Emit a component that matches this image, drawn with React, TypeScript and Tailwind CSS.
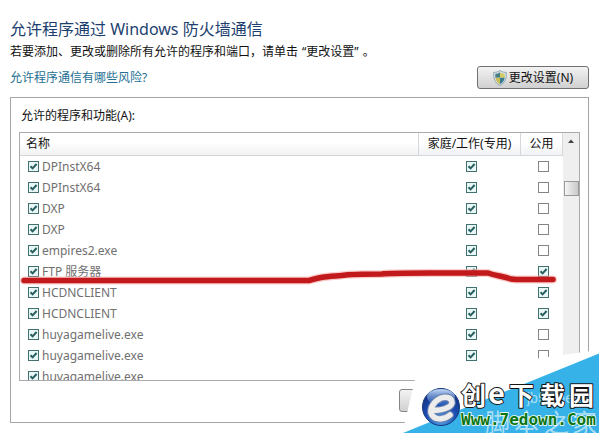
import React from "react";

type Program = { name: string; home: boolean; open: boolean };

const programs: Program[] = [
  { name: "DPInstX64", home: true, open: false },
  { name: "DPInstX64", home: true, open: false },
  { name: "DXP", home: true, open: false },
  { name: "DXP", home: true, open: false },
  { name: "empires2.exe", home: true, open: false },
  { name: "FTP 服务器", home: true, open: true },
  { name: "HCDNCLIENT", home: true, open: true },
  { name: "HCDNCLIENT", home: true, open: true },
  { name: "huyagamelive.exe", home: true, open: false },
  { name: "huyagamelive.exe", home: true, open: false },
  { name: "huyagamelive.exe", home: true, open: false },
];

function Tick({ id, label, on }: { id?: string; label?: string; on: boolean }) {
  return (
    <span className="grid size-[11px] shrink-0">
      <input
        id={id}
        type="checkbox"
        aria-label={label}
        defaultChecked={on}
        className="peer col-start-1 row-start-1 size-[11px] appearance-none border border-[#858585] bg-white checked:border-[#42706f] checked:bg-[#e9f8f7]"
      />
      <svg
        viewBox="0 0 11 11"
        className="pointer-events-none invisible col-start-1 row-start-1 size-[11px] peer-checked:visible"
      >
        <path d="M2.5 5.2 4.6 7.4 8.6 3" fill="none" stroke="#275f5e" strokeWidth="2" />
      </svg>
    </span>
  );
}

function Shield() {
  return (
    <svg viewBox="0 0 14 16" className="h-4 w-3.5">
      <path d="M7 .5C5 2 3 2.4 .7 2.4 .2 8.5 2 13 7 15.5 12 13 13.8 8.5 13.3 2.4 11 2.4 9 2 7 .5Z" fill="#d9e4e8" stroke="#8299a5" strokeWidth=".8" />
      <path d="M7 2.2C5.5 3.2 4 3.7 2.3 3.8V7.800H7Z" fill="#4a7fa5" />
      <path d="M7 2.2C8.5 3.2 10 3.7 11.7 3.8V7.800H7Z" fill="#d4c963" />
      <path d="M2.3 7.8C2.7 10.8 4.3 12.8 7 14.2V7.8Z" fill="#ccbd55" />
      <path d="M11.7 7.8C11.3 10.8 9.7 12.8 7 14.2V7.8Z" fill="#397d91" />
      <path d="M3 4.5C5 4.3 6 3.6 7 3V7H3Z" fill="#49835e" opacity=".6" />
    </svg>
  );
}

const markerPath =
  "M24 280.5H309C322 277 326 276.5 341 275.5 352 274 362 274 382 274 390 272.5 400 273 488 273 496 276 503 276 511 279 516 280 524 279.5 553 279.5";

function Marker() {
  return (
    <svg viewBox="0 0 599 435" className="pointer-events-none absolute top-0 left-0 h-[435px] w-[599px]" fill="none" strokeLinecap="round" strokeLinejoin="round">
      <path d={markerPath} stroke="#f6aaa6" strokeWidth="8" opacity=".6" />
      <path d={markerPath} stroke="#c21a1c" strokeWidth="5.5" />
    </svg>
  );
}

function Watermark() {
  return (
    <svg viewBox="399 345 200 90" className="pointer-events-none absolute right-0 top-[345px] h-[90px] w-[200px]">
      <defs>
        <radialGradient id="orb" cx=".5" cy=".85" r=".8">
          <stop offset="0" stopColor="#55a8ee" />
          <stop offset=".5" stopColor="#1c50b6" />
          <stop offset="1" stopColor="#122f7c" />
        </radialGradient>
        <linearGradient id="gloss" x1="0" y1="0" x2="0" y2="1">
          <stop offset="0" stopColor="#c7dcf8" />
          <stop offset="1" stopColor="#3d73cc" stopOpacity=".4" />
        </linearGradient>
      </defs>
      <path d="M416 375 540 358 599 350V435H399L403 430Z" fill="#fff" />
      <path d="M599 353.5 403 433H599Z" fill="#36b2e9" />
      <text x="527" y="403" fontSize="14" fill="#a9def5" className="font-['Liberation_Sans',sans-serif]">jb51.net</text>
      <text x="485" y="432" fontSize="25" fill="#a9def5" className="font-['Noto_Sans_CJK_SC',sans-serif]">
        <tspan x="485">脚</tspan>
        <tspan x="514">本</tspan>
        <tspan x="544">之</tspan>
        <tspan x="572">家</tspan>
      </text>
      <path d="M399 433H599V435H399Z" fill="#fff" />
      <circle cx="441" cy="407" r="18.5" fill="url(#orb)" stroke="#173779" />
      <ellipse cx="441" cy="397" rx="14" ry="8" fill="url(#gloss)" />
      <g fill="none" strokeLinecap="round">
        <path d="M433 410C440 411 451 408 452 403 452 398 447 396 441 398 434 401 430 408 431 413 434 421 444 420 450 415" stroke="#6c83ad" strokeWidth="7.5" />
        <path d="M433 410C440 411 451 408 452 403 452 398 447 396 441 398 434 401 430 408 431 413 434 421 444 420 450 415" stroke="#ececec" strokeWidth="5.5" />
      </g>
      <g fill="#fff" stroke="#151515" strokeWidth="2" paintOrder="stroke" strokeLinejoin="round" fontSize="25" fontWeight="700" className="font-['Noto_Sans_CJK_SC',sans-serif]">
        <text x="461" y="405">创</text>
        <text x="488" y="404" fontSize="29">e</text>
        <text x="509" y="405">下</text>
        <text x="540" y="405">载</text>
        <text x="569" y="405">园</text>
      </g>
      <text x="461" y="425" fontSize="16" fontWeight="700" fill="#0b7414" stroke="#f4fff2" strokeWidth="1.5" paintOrder="stroke" className="font-['DejaVu_Sans_Mono',monospace]">
        Www.7edown.Com
      </text>
    </svg>
  );
}

export default function App() {
  return (
    <main className="relative overflow-hidden bg-white px-2.5 pt-[18px] pb-3 font-['Noto_Sans','Noto_Sans_CJK_SC',sans-serif] text-xs text-[#111]">
      <h1 className="text-base leading-[22px] text-[#1d3f70]">允许程序通过 Windows 防火墙通信</h1>
      <p className="mt-0.5 leading-5">
        若要添加、更改或删除所有允许的程序和端口，请单击<span className="mx-1">“更改设置”</span>。
      </p>
      <div className="mt-1 flex items-start justify-between">
        <a href="#risks" className="mt-0.5 leading-5 text-[#256f92]">允许程序通信有哪些风险?</a>
        <button className="flex h-[23px] w-28 items-center justify-center gap-0.5 rounded-[3px] border border-[#707070] bg-linear-to-b from-[#f3f3f3] to-[#d0d0d0]">
          <Shield />
          更改设置(N)
        </button>
      </div>

      <section className="mt-2 border border-[#a5a5a5] px-2 pt-2 pb-2.5">
        <h2 id="list-title" className="ml-0.5 pb-1.5 leading-5">允许的程序和功能(A):</h2>
        <div className="flex h-[249px] overflow-hidden border border-[#a9abae]">
          <div className="min-w-0 flex-1 overflow-hidden">
            <table aria-labelledby="list-title" className="w-full table-fixed border-separate border-spacing-0">
              <thead>
                <tr className="h-[23px] bg-linear-to-b from-white from-40% to-[#f0f1f3] to-100% text-left">
                  <th className="border-b border-[#d5d5d5] p-0 pl-1.5 font-normal">名称</th>
                  <th className="w-[102px] border-b border-l border-[#d5d9de] p-0 text-center font-normal whitespace-nowrap">家庭/工作(专用)</th>
                  <th className="w-[43px] border-x border-b border-[#d5d9de] p-0 text-center font-normal">公用</th>
                </tr>
              </thead>
              <tbody className="text-[#707070]">
                {programs.map((p, i) => (
                  <tr key={i} className="h-[21px]">
                    <td className="p-0 pl-2">
                      <div className="flex items-center gap-[3px] leading-5">
                        <Tick id={`program-${i}`} on />
                        <label htmlFor={`program-${i}`}>{p.name}</label>
                      </div>
                    </td>
                    <td className="p-0 pl-1">
                      <div className="flex justify-center"><Tick label={`${p.name} 家庭/工作(专用)`} on={p.home} /></div>
                    </td>
                    <td className="p-0 pl-1">
                      <div className="flex justify-center"><Tick label={`${p.name} 公用`} on={p.open} /></div>
                    </td>
                  </tr>
                ))}
              </tbody>
            </table>
          </div>
          <div className="flex w-4 flex-col items-center bg-[#efefef]">
            <svg viewBox="0 0 16 16" className="size-4"><path d="M5 10 8 6.5 11 10Z" fill="#444" /></svg>
            <div className="mt-8 h-[15px] w-[15px] border border-[#999] bg-linear-to-r from-[#f5f5f5] to-[#c9c9c9]" />
          </div>
        </div>
        <div className="mt-2 flex justify-end">
          <button aria-label="允许运行另一程序" className="h-[23px] w-[181px] rounded-[3px] border border-[#858585] bg-linear-to-b from-[#f3f3f3] to-[#d0d0d0]" />
        </div>
      </section>
      <Marker />
      <Watermark />
    </main>
  );
}
